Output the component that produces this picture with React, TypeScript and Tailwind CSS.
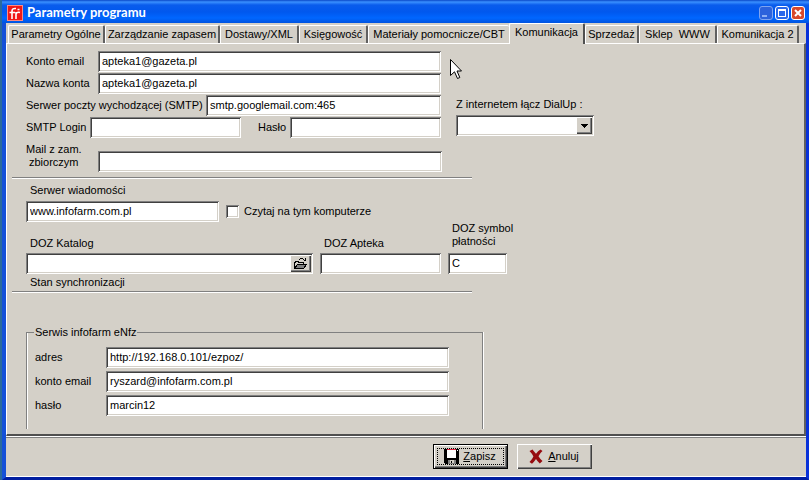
import type { ReactNode } from 'react';

interface Tab {
  label: string;
  width: string;
}

const ACTIVE_TAB = 'Komunikacja';

const tabs: Tab[] = [
  { label: 'Parametry Ogólne', width: 'w-[97px]' },
  { label: 'Zarządzanie zapasem', width: 'w-[115px]' },
  { label: 'Dostawy/XML', width: 'w-[79px]' },
  { label: 'Księgowość', width: 'w-[69px]' },
  { label: 'Materiały pomocnicze/CBT', width: 'w-[141px]' },
  { label: 'Komunikacja', width: 'w-[76px]' },
  { label: 'Sprzedaż', width: 'w-[54px]' },
  { label: 'Sklep  WWW', width: 'w-[78px]' },
  { label: 'Komunikacja 2', width: 'w-[82px]' },
];

const sunken =
  'h-[21px] bg-white shadow-[inset_1px_1px_#808080,inset_-1px_-1px_#ffffff,inset_2px_2px_#404040,inset_-2px_-2px_#d4d0c8]';
const raised =
  'bg-[#d4d0c8] shadow-[inset_1px_1px_#ffffff,inset_-1px_-1px_#404040,inset_-2px_-2px_#808080]';

interface FieldProps {
  id: string;
  width: string;
  value?: string;
}

const Field = ({ id, width, value = '' }: FieldProps) => (
  <input
    id={id}
    type="text"
    defaultValue={value}
    className={`${sunken} ${width} shrink-0 px-1 pb-[2px] outline-none`}
  />
);

interface LabelProps {
  htmlFor: string;
  className?: string;
  children: ReactNode;
}

const Label = ({ htmlFor, className = '', children }: LabelProps) => (
  <label htmlFor={htmlFor} className={`shrink-0 whitespace-nowrap ${className}`}>
    {children}
  </label>
);

const Divider = () => (
  <div className="ml-[5px] h-[2px] w-[460px] border-t border-b border-t-[#808080] border-b-white" />
);

const Logo = () => (
  <svg width="16" height="16" viewBox="0 0 16 16" aria-hidden="true">
    <rect width="16" height="16" fill="#f01818" />
    <rect x="0.5" y="0.5" width="15" height="15" fill="none" stroke="#ff8a80" />
    <path d="M5 14V6Q5 3 9 3.500M2.500 7.500H8M9 14V7M9 9Q10 6.500 13 7.500M10.500 4.500H12.500" fill="none" stroke="#fff" strokeWidth="1.6" />
  </svg>
);

const FolderIcon = () => (
  <svg width="15" height="13" viewBox="0 0 15 13" shapeRendering="crispEdges" aria-hidden="true">
    <path d="M1.5 11.5V5.5H2.5V4.5H5.5V5.5H10.5V7.5" fill="none" stroke="#000" />
    <path d="M1.5 11.5L4.5 7.5H13.5L10.5 11.5Z" fill="#808080" stroke="#000" />
    <path d="M6 2.5H7M7 1.5H10M10 2.5H11M11 3.5H13M12.5 1V4" fill="none" stroke="#000" />
  </svg>
);

const FloppyIcon = () => (
  <svg width="15" height="15" viewBox="0 0 15 15" shapeRendering="crispEdges" aria-hidden="true">
    <path d="M0 0H15V15H1L0 14Z" fill="#000" />
    <rect x="3" y="1" width="9" height="8" fill="#fff" />
    <rect x="3" y="0" width="9" height="1" fill="#e0203c" />
    <rect x="13" y="1" width="1" height="1" fill="#fff" />
    <rect x="4" y="11" width="8" height="4" fill="#808080" />
    <rect x="6" y="11" width="4" height="3" fill="#d4d0c8" />
    <rect x="7" y="12" width="1" height="2" fill="#000" />
  </svg>
);

const CrossIcon = () => (
  <svg width="14" height="15" viewBox="0 0 14 15" aria-hidden="true">
    <path d="M0.500 2L3.500 0.500Q5 2.500 7 4.800Q9 2 11.500 0.500L13.500 2Q11 4 9.500 7.300Q11 10 13.500 12L10.800 14.500Q8.500 12.500 7 10Q5 13 3 14.800L0.500 13Q3.200 10.500 4.400 7.500Q3 4.500 0.500 2Z" fill="#960c10" />
  </svg>
);

const Cursor = () => (
  <svg width="12" height="21" viewBox="0 0 12 21" aria-hidden="true">
    <path d="M0.5 0.5V16.500L4.500 12.800L7.500 19.500L9.800 18.500L7 12H11.500Z" fill="#fff" stroke="#000" />
  </svg>
);

const TitleBar = () => (
  <header className="flex h-[23px] shrink-0 items-center gap-1 bg-[linear-gradient(#0a48c8,#3a90ff_2px,#0a5cec_5px,#0058ee_12px,#0066ff_18px,#0054e0)] pt-0.5 pr-1 pl-[5px]">
    <Logo />
    <h1 className="flex-1 font-[Lato,sans-serif] text-[13px] font-bold whitespace-nowrap text-white">
      Parametry programu
    </h1>
    <div className="flex gap-[2px]">
      <button type="button" aria-label="Minimalizuj" disabled className="flex size-[14px] items-end rounded-[3px] border border-[#7fa4f0] bg-[#2c62dc] p-[2px]">
        <span className="h-[2px] w-[5px] bg-[#8fb0f4]" />
      </button>
      <button type="button" aria-label="Maksymalizuj" className="flex size-[14px] items-center justify-center rounded-[3px] border border-white bg-[#2a68ea]">
        <span className="size-2 border border-t-2 border-white" />
      </button>
      <button type="button" aria-label="Zamknij" className="flex size-[14px] items-center justify-center rounded-[3px] border border-white bg-[#d8482a]">
        <svg width="8" height="8" viewBox="0 0 8 8" aria-hidden="true">
          <path d="M1 1L7 7M7 1L1 7" stroke="#fff" strokeWidth="2" />
        </svg>
      </button>
    </div>
  </header>
);

const TabBar = () => (
  <nav role="tablist" className="flex h-[20px] shrink-0 items-end px-[2px]">
    {tabs.map((tab) => {
      const active = tab.label === ACTIVE_TAB;
      return (
        <button
          key={tab.label}
          type="button"
          role="tab"
          aria-selected={active}
          className={`${tab.width} shrink-0 rounded-t-[2px] border-t border-l border-t-white border-l-white text-center whitespace-pre ${
            active
              ? 'relative z-10 -mb-px h-[21px] border-r-2 border-r-[#505050] bg-[#d4d0c8] pb-[3px]'
              : tab.label === 'Materiały pomocnicze/CBT'
                ? 'h-[18px]'
                : 'h-[18px] border-r-2 border-r-[#606060]'
          }`}
        >
          {tab.label}
        </button>
      );
    })}
  </nav>
);

const MailSettings = () => (
  <section className="flex h-[126px] gap-[14px] pl-[19px]">
    <div className="flex w-[416px] shrink-0 flex-col gap-px">
      <div className="flex items-center">
        <Label htmlFor="email" className="w-[72px]">Konto email</Label>
        <Field id="email" width="w-[343px]" value="apteka1@gazeta.pl" />
      </div>
      <div className="flex items-center">
        <Label htmlFor="name" className="w-[72px]">Nazwa konta</Label>
        <Field id="name" width="w-[343px]" value="apteka1@gazeta.pl" />
      </div>
      <div className="flex items-center">
        <Label htmlFor="smtp" className="w-[180px]">Serwer poczty wychodzącej (SMTP)</Label>
        <Field id="smtp" width="w-[235px]" value="smtp.googlemail.com:465" />
      </div>
      <div className="flex items-center">
        <Label htmlFor="login" className="w-[64px]">SMTP Login</Label>
        <Field id="login" width="w-[151px]" />
        <Label htmlFor="pass" className="ml-[17px] w-[32px]">Hasło</Label>
        <Field id="pass" width="w-[151px]" />
      </div>
      <div className="flex items-end pt-1">
        <Label htmlFor="order" className="w-[72px] pb-[3px] leading-[13px]">
          Mail z zam.
          <br />
          <span className="pl-[3px]">zbiorczym</span>
        </Label>
        <Field id="order" width="w-[344px]" />
      </div>
    </div>
    <div className="relative flex flex-col pt-[46px]">
      <div className="absolute top-2 -left-[6px]">
        <Cursor />
      </div>
      <Label htmlFor="dialup" className="leading-[15px]">Z internetem łącz DialUp :</Label>
      <div className="relative mt-[3px] w-[138px]">
        <select id="dialup" className={`${sunken} w-full appearance-none outline-none`}>
          <option></option>
        </select>
        <span className={`${raised} pointer-events-none absolute top-[2px] right-[2px] flex h-[17px] w-4 items-center justify-center`}>
          <svg width="7" height="4" viewBox="0 0 7 4" shapeRendering="crispEdges" aria-hidden="true">
            <path d="M0 0H7L3.500 4Z" fill="#000" />
          </svg>
        </span>
      </div>
    </div>
  </section>
);

const NewsServer = () => (
  <section className="pl-[19px]">
    <Label htmlFor="news" className="mt-1 block pl-1 leading-[15px]">Serwer wiadomości</Label>
    <div className="mt-[3px] flex items-center">
      <Field id="news" width="w-[193px]" value="www.infofarm.com.pl" />
      <input
        id="read"
        type="checkbox"
        className="ml-[7px] size-[13px] appearance-none bg-white shadow-[inset_1px_1px_#808080,inset_-1px_-1px_#ffffff,inset_2px_2px_#404040,inset_-2px_-2px_#d4d0c8]"
      />
      <Label htmlFor="read" className="ml-[5px]">Czytaj na tym komputerze</Label>
    </div>
    <div className="flex items-end">
      <div className="w-[294px]">
        <Label htmlFor="catalog" className="block pb-[2px] pl-1 leading-[15px]">DOZ Katalog</Label>
        <div className="relative">
          <Field id="catalog" width="w-[287px]" />
          <button
            type="button"
            aria-label="Wybierz katalog"
            className={`${raised} absolute top-[2px] left-[264px] flex h-[17px] w-[21px] items-center justify-center`}
          >
            <FolderIcon />
          </button>
        </div>
      </div>
      <div className="w-[128px]">
        <Label htmlFor="pharmacy" className="block pb-[2px] pl-1 leading-[15px]">DOZ Apteka</Label>
        <Field id="pharmacy" width="w-[121px]" />
      </div>
      <div>
        <Label htmlFor="symbol" className="block pb-[5px] pl-1 leading-[13px]">
          DOZ symbol
          <br />
          płatności
        </Label>
        <Field id="symbol" width="w-[59px]" value="C" />
      </div>
    </div>
    <p className="pt-px pb-px pl-1 leading-[15px]">Stan synchronizacji</p>
  </section>
);

const EnfzService = () => (
  <fieldset className="mt-8 mb-[5px] ml-[19px] h-[104px] w-[457px] border border-b-0 border-[#808080] px-[7px] shadow-[inset_1px_0_#ffffff,1px_0_#ffffff]">
    <legend className="px-px leading-[15px]">Serwis infofarm eNfz</legend>
    <div className="mt-[7px] flex flex-col gap-[3px]">
      <div className="flex items-center">
        <Label htmlFor="address" className="w-[72px] pl-px">adres</Label>
        <Field id="address" width="w-[343px]" value="http://192.168.0.101/ezpoz/" />
      </div>
      <div className="flex items-center">
        <Label htmlFor="account" className="w-[72px] pl-px">konto email</Label>
        <Field id="account" width="w-[343px]" value="ryszard@infofarm.com.pl" />
      </div>
      <div className="flex items-center">
        <Label htmlFor="secret" className="w-[72px] pl-px">hasło</Label>
        <Field id="secret" width="w-[343px]" value="marcin12" />
      </div>
    </div>
  </fieldset>
);

const App = () => (
  <div className="flex min-h-screen flex-col border-l-2 border-l-[#2a6a9c] bg-[#0831d9] font-['Liberation_Sans',sans-serif] text-[11px] leading-[15px] text-black">
    <TitleBar />
    <div className="flex flex-1 flex-col border-r-[3px] border-b-[3px] border-l-4 border-r-[#0831d9] border-b-[#001ea0] border-l-[#1450d8] bg-[#d4d0c8]">
      <TabBar />
      <main className="flex flex-1 flex-col border-t border-r-2 border-b-2 border-l border-t-white border-r-[#606060] border-b-[#505050] border-l-white pt-[7px]">
        <MailSettings />
        <Divider />
        <NewsServer />
        <Divider />
        <EnfzService />
      </main>
      <footer className="flex h-[41px] shrink-0 items-center justify-center gap-[9px] border-t border-b border-t-white border-b-white pl-[212px] shadow-[inset_0_1px_#808080]">
        <button type="submit" className="h-[25px] w-[75px] border border-black">
          <span className={`${raised} flex h-full items-center p-[3px]`}>
            <span className="flex h-full w-full items-center justify-center gap-1 border border-dotted border-black">
              <FloppyIcon />
              <span><u>Z</u>apisz</span>
            </span>
          </span>
        </button>
        <button type="button" className={`${raised} flex h-[25px] w-[75px] items-center justify-center gap-[5px]`}>
          <CrossIcon />
          <span><u>A</u>nuluj</span>
        </button>
      </footer>
    </div>
  </div>
);

export default App;
